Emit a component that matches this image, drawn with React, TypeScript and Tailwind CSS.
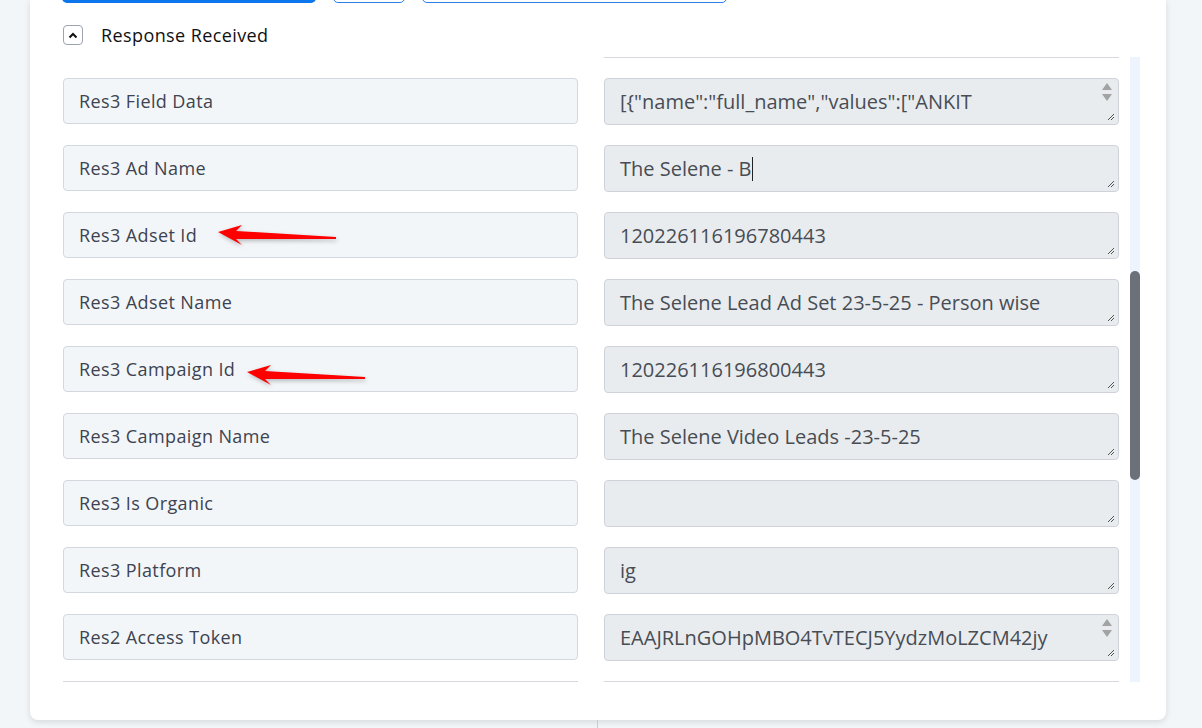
import React from "react";

type Row = { label: string; value: string; spinner?: boolean; caret?: boolean };

const rows: Row[] = [
  { label: "Res3 Field Data", value: '[{"name":"full_name","values":["ANKIT', spinner: true },
  { label: "Res3 Ad Name", value: "The Selene - B", caret: true },
  { label: "Res3 Adset Id", value: "120226116196780443" },
  { label: "Res3 Adset Name", value: "The Selene Lead Ad Set 23-5-25 - Person wise" },
  { label: "Res3 Campaign Id", value: "120226116196800443" },
  { label: "Res3 Campaign Name", value: "The Selene Video Leads -23-5-25" },
  { label: "Res3 Is Organic", value: "" },
  { label: "Res3 Platform", value: "ig" },
  { label: "Res2 Access Token", value: "EAAJRLnGOHpMBO4TvTECJ5YydzMoLZCM42jy", spinner: true },
];

const font = { fontFamily: "'Open Sans', 'Noto Sans', sans-serif" };

function Grip() {
  return (
    <svg width="8" height="8" viewBox="0 0 8 8" className="absolute bottom-[3px] right-[3px]">
      <path d="M7 1 L1 7 M7 4 L4 7" stroke="#555" strokeWidth="1" />
    </svg>
  );
}

function Spinner() {
  return (
    <div className="absolute right-[6px] top-[4px] flex flex-col items-center gap-[4px]">
      <svg width="10" height="7" viewBox="0 0 10 7">
        <path d="M5 0 L10 7 L0 7 Z" fill="#a3a3a3" />
      </svg>
      <svg width="10" height="7" viewBox="0 0 10 7">
        <path d="M0 0 L10 0 L5 7 Z" fill="#a3a3a3" />
      </svg>
    </div>
  );
}

function Arrow() {
  return (
    <svg width="124" height="22" viewBox="0 0 124 22" style={{ filter: "drop-shadow(1px 2px 2px rgba(0,0,0,0.25))" }}>
      <path d="M2 7 L26 0 L20 6 L120 12 L120 14 L20 14 L26 20 Z" fill="#ff0000" />
    </svg>
  );
}

export default function App() {
  return (
    <div className="flex h-[728px] w-[1202px] flex-col overflow-hidden bg-[#f3f6f9]" style={font}>
      <div className="ml-[30px] flex h-[720px] w-[1136px] shrink-0 flex-col rounded-b-lg bg-white shadow-[0_2px_6px_rgba(0,0,0,0.12)]">
        {/* action buttons, mostly scrolled above */}
        <div className="flex h-[3px] items-end gap-[17px] overflow-visible pl-[32px]">
          <div className="h-[40px] w-[254px] shrink-0 rounded-[5px] bg-[#0d76ec]" />
          <div className="h-[40px] w-[72px] shrink-0 rounded-[5px] border border-[#2f7fe6]" />
          <div className="h-[40px] w-[305px] shrink-0 rounded-[5px] border border-[#2f7fe6]" />
        </div>

        <div className="mt-[22px] flex h-[20px] items-center pl-[33px]">
          <div className="flex h-[20px] w-[20px] shrink-0 items-center justify-center rounded-[4px] border border-[#9ca3af]">
            <svg width="10" height="7" viewBox="0 0 10 7">
              <path d="M1.5 5.5 L5 2 L8.5 5.5" stroke="#111" strokeWidth="2" fill="none" />
            </svg>
          </div>
          <span className="ml-[18px] text-[18px] leading-[20px] tracking-[0.4px] text-[#111]">Response Received</span>
        </div>

        <div className="relative mt-[12px] flex h-[625px] pl-[33px]">
          <div className="flex w-[1056px] shrink-0 flex-col">
            <div className="ml-[541px] h-px w-[515px] shrink-0 bg-[#d6d9de]" />
            <div className="mt-[20px] flex flex-col gap-[20px]">
              {rows.map((r) => (
                <div key={r.label} className="flex items-start gap-[26px]">
                  <div className="flex h-[46px] w-[515px] shrink-0 items-center rounded-[4px] border border-[#d3d7de] bg-[#f3f6f9] pl-[15px] text-[18px] tracking-[0.4px] text-[#3d4350]">
                    {r.label}
                  </div>
                  <div className="relative flex h-[47px] w-[515px] shrink-0 items-center rounded-[4px] border border-[#cfd3d9] bg-[#e9ecef] pl-[15px] text-[20px] text-[#484d54]">
                    <span className="whitespace-nowrap">{r.value}</span>
                    {r.caret && <span className="ml-px h-[24px] w-px bg-[#222]" />}
                    {r.spinner && <Spinner />}
                    <Grip />
                  </div>
                </div>
              ))}
            </div>
            <div className="mt-[20px] flex gap-[26px]">
              <div className="h-px w-[515px] shrink-0 bg-[#d6d9de]" />
              <div className="h-px w-[515px] shrink-0 bg-[#d6d9de]" />
            </div>
          </div>
          <div className="ml-[11px] h-[625px] w-[10px] shrink-0 bg-[#edf4fe]">
            <div className="mt-[214px] h-[209px] w-[10px] rounded-full bg-[#6b7079]" />
          </div>

          <div className="absolute left-[186px] top-[168px]">
            <Arrow />
          </div>
          <div className="absolute left-[215px] top-[308px]">
            <Arrow />
          </div>
        </div>
      </div>
      <div className="ml-[597px] h-[8px] w-px bg-[#c9ccd1]" />
    </div>
  );
}
